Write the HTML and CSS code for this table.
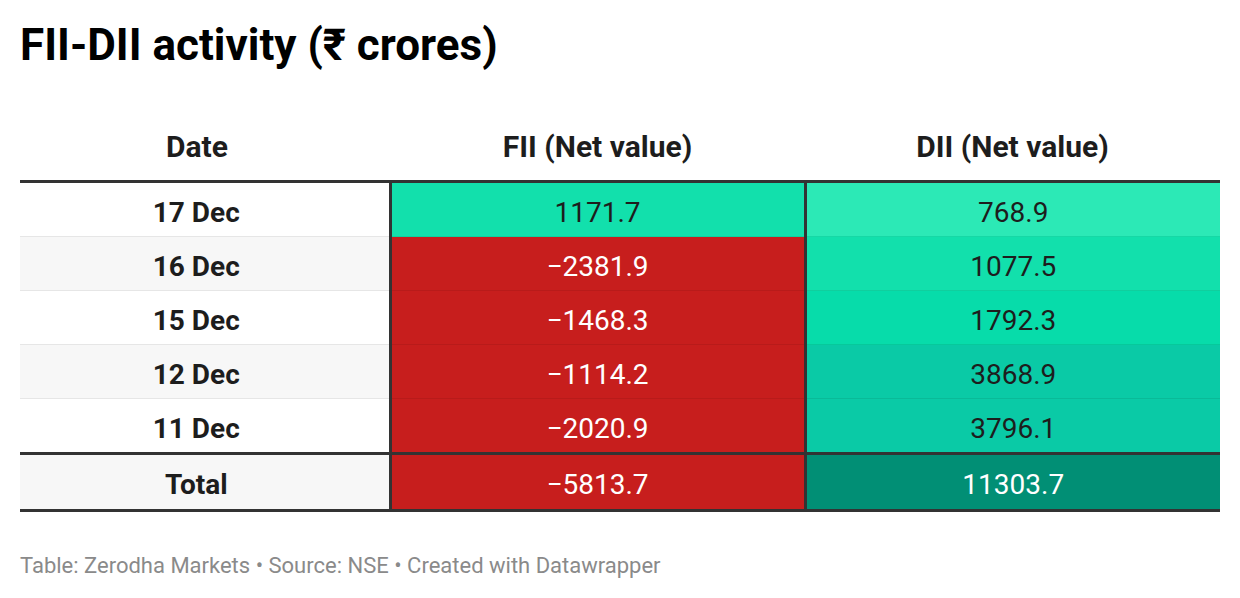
FILE: index.html
```html
<!DOCTYPE html>
<html>
<head>
<meta charset="utf-8">
<link rel="stylesheet" href="styles.css">
</head>
<body>
<div class="chart">
  <h1 class="title">FII-DII activity (₹ crores)</h1>
  <table class="tbl">
    <thead>
      <tr>
        <th class="c1">Date</th>
        <th class="c2">FII (Net value)</th>
        <th class="c3">DII (Net value)</th>
      </tr>
    </thead>
    <tbody>
      <tr class="odd">
        <td class="c1">17 Dec</td>
        <td class="c2 g2">1171.7</td>
        <td class="c3 g1">768.9</td>
      </tr>
      <tr class="even">
        <td class="c1">16 Dec</td>
        <td class="c2 red">−2381.9</td>
        <td class="c3 g2">1077.5</td>
      </tr>
      <tr class="odd">
        <td class="c1">15 Dec</td>
        <td class="c2 red">−1468.3</td>
        <td class="c3 g3">1792.3</td>
      </tr>
      <tr class="even">
        <td class="c1">12 Dec</td>
        <td class="c2 red">−1114.2</td>
        <td class="c3 g4">3868.9</td>
      </tr>
      <tr class="odd last">
        <td class="c1">11 Dec</td>
        <td class="c2 red">−2020.9</td>
        <td class="c3 g4">3796.1</td>
      </tr>
      <tr class="even total">
        <td class="c1">Total</td>
        <td class="c2 red">−5813.7</td>
        <td class="c3 g5">11303.7</td>
      </tr>
    </tbody>
  </table>
  <p class="footer">Table: Zerodha Markets • Source: NSE • Created with Datawrapper</p>
</div>
</body>
</html>
```
FILE: styles.css
```css
html, body {
  margin: 0;
  padding: 0;
  background: #ffffff;
}
body {
  font-family: Roboto, "Noto Sans", "Liberation Sans", sans-serif;
  color: #1d1d1d;
}
.chart {
  padding: 20px 20px 0 20px;
}
.title {
  margin: 0;
  font-size: 44px;
  font-weight: 700;
  line-height: 50px;
  color: #000;
}
.tbl {
  margin-top: 51px;
  width: 1200px;
  border-collapse: collapse;
  table-layout: fixed;
}
.tbl th {
  font-size: 30px;
  font-weight: 700;
  height: 60px;
  line-height: 35px;
  padding: 0 0 16px 0;
  text-align: center;
  vertical-align: bottom;
  border-bottom: 3px solid #333333;
  color: #1d1d1d;
  box-sizing: border-box;
}
.tbl th.c1 { width: 370px; padding-right: 16px; }
.tbl th.c2, .tbl th.c3 { width: 415px; }
.tbl td {
  font-size: 28px;
  height: 47px;
  padding: 6px 0 0 0;
  text-align: center;
  vertical-align: middle;
  border-bottom: 1px solid #e6e6e6;
}
.tbl td.c1 { font-weight: 700; padding-right: 16px; }
.tbl td.c2, .tbl td.c3 { border-left: 3px solid #333333; }
.tbl tr.odd td.c1 { background: #ffffff; }
.tbl tr.even td.c1 { background: #f7f7f7; }
.tbl tr.last td { border-bottom: 3px solid #333333; }
.tbl tr.total td { height: 48px; border-bottom: 3px solid #333333; }
.g1 { background: #2ce9b6; }
.g2 { background: #12e0ac; border-bottom-color: #10cf9e !important; }
.g3 { background: #07dcaa; border-bottom-color: #06c99b !important; }
.g4 { background: #0acaa6; border-bottom-color: #09ba98 !important; }
.g5 { background: #018f75; color: #ffffff; }
.g1 { border-bottom-color: #16d8a5 !important; }
.red { background: #c71e1d; color: #ffffff; border-bottom-color: #b81b1a !important; }
.tbl tr.last td.red, .tbl tr.last td.g4 { border-bottom-color: #333333 !important; }
.tbl tr.total td.red, .tbl tr.total td.g5 { border-bottom-color: #333333 !important; }
.footer {
  margin: 41px 0 0 0;
  font-size: 22px;
  color: #8a8a8a;
  line-height: 26px;
}
```
